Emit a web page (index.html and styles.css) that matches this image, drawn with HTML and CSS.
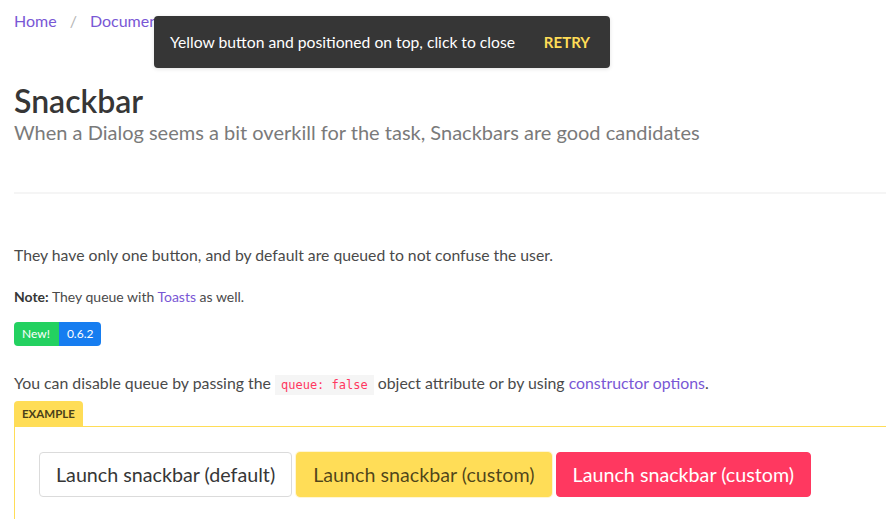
FILE: index.html
```html
<!DOCTYPE html>
<html>
<head>
<meta charset="utf-8">
<link rel="stylesheet" href="styles.css">
</head>
<body>
<main class="page">
  <nav class="breadcrumb">
    <a href="#">Home</a><span class="sep">/</span><a href="#">Documentation</a><span class="sep">/</span><span class="current">Snackbar</span>
  </nav>
  <header class="hero">
    <h1 class="title">Snackbar</h1>
    <h2 class="subtitle">When a Dialog seems a bit overkill for the task, Snackbars are good candidates</h2>
  </header>
  <hr class="divider">
  <p class="text">They have only one button, and by default are queued to not confuse the user.</p>
  <p class="note"><strong>Note:</strong> They queue with <a href="#">Toasts</a> as well.</p>
  <div class="tags"><span class="tag tag-new">New!</span><span class="tag tag-ver">0.6.2</span></div>
  <p class="text small">You can disable queue by passing the <code>queue: false</code> object attribute or by using <a href="#">constructor options</a>.</p>
  <section class="example">
    <div class="example-tab">EXAMPLE</div>
    <div class="example-body">
      <button class="btn">Launch snackbar (default)</button>
      <button class="btn btn-warning">Launch snackbar (custom)</button>
      <button class="btn btn-danger">Launch snackbar (custom)</button>
    </div>
  </section>
</main>
<div class="snackbar">
  <span class="snackbar-text">Yellow button and positioned on top, click to close</span>
  <span class="snackbar-action">RETRY</span>
</div>
</body>
</html>
```
FILE: styles.css
```css
html, body {
  margin: 0;
  padding: 0;
  background: #fff;
  overflow: hidden;
}
body {
  font-family: Lato, "Liberation Sans", sans-serif;
  color: #4a4a4a;
  font-size: 16px;
  width: 886px;
  height: 519px;
  position: relative;
}
a { color: #7957d5; text-decoration: none; }
.page {
  width: 1000px;
  padding: 10px 0 0 14px;
}
.breadcrumb {
  display: flex;
  align-items: center;
  font-size: 16px;
  line-height: 22px;
}
.breadcrumb .sep {
  color: #b5b5b5;
  padding: 0 13px;
}
.breadcrumb .current { color: #363636; }
.hero { padding-top: 51px; }
.title {
  margin: 0;
  font-size: 32px;
  font-weight: 600;
  color: #363636;
  line-height: 36px;
}
.subtitle {
  margin: 0;
  font-size: 20px;
  font-weight: 400;
  color: #7a7a7a;
  line-height: 26px;
}
.divider {
  border: 0;
  height: 2px;
  background: #f5f5f5;
  margin: 47px 0 0;
}
.text {
  margin: 49px 0 0;
  line-height: 24px;
  font-size: 15.75px;
}
.note {
  margin: 19px 0 0;
  font-size: 14px;
  line-height: 22px;
}
.note strong { color: #363636; }
.tags {
  display: flex;
  margin-top: 14px;
}
.tag {
  font-size: 12px;
  color: #fff;
  height: 24px;
  line-height: 24px;
  padding: 0 8px;
}
.tag-new { background: #23d160; border-radius: 4px 0 0 4px; padding: 0 9px 0 8px; }
.tag-ver { background: #167df0; border-radius: 0 4px 4px 0; }
.text.small { margin-top: 25px; font-size: 15.85px; }
code {
  font-family: "DejaVu Sans Mono", monospace;
  font-size: 12px;
  color: #ff3860;
  background: #f5f5f5;
  padding: 3px 6px;
}
.example { margin-top: 4px; }
.example-tab {
  display: inline-block;
  background: #ffdd57;
  color: #4a3f1a;
  font-size: 11.5px;
  font-weight: 700;
  padding: 0 8px;
  height: 25px;
  line-height: 25px;
  border-radius: 4px 4px 0 0;
}
.example-body {
  border-top: 1px solid #ffdd57;
  border-left: 1px solid #ffdd57;
  padding: 25px 24px 30px;
  display: flex;
  gap: 4px;
}
.btn {
  font-family: inherit;
  font-size: 19.7px;
  height: 45px;
  padding: 0 16px;
  border: 1px solid #dbdbdb;
  border-radius: 4px;
  background: #fff;
  color: #363636;
}
.btn-warning {
  background: #ffdd57;
  border-color: #ffdd57;
  color: rgba(0,0,0,0.7);
  box-shadow: 0 0 0 1px rgba(255,221,87,0.25);
}
.btn-danger {
  background: #ff3860;
  border-color: #ff3860;
  color: #fff;
}
.snackbar {
  position: absolute;
  left: 154px;
  top: 16px;
  width: 456px;
  height: 52px;
  box-sizing: border-box;
  background: #363636;
  border-radius: 4px;
  box-shadow: 0 1px 4px rgba(0,0,0,0.12);
  display: flex;
  align-items: center;
  justify-content: space-between;
  padding: 0 20px 0 16px;
  color: #fff;
  font-size: 15.7px;
}
.snackbar-action {
  color: #ffdd57;
  font-weight: 700;
  font-size: 15px;
}
```
